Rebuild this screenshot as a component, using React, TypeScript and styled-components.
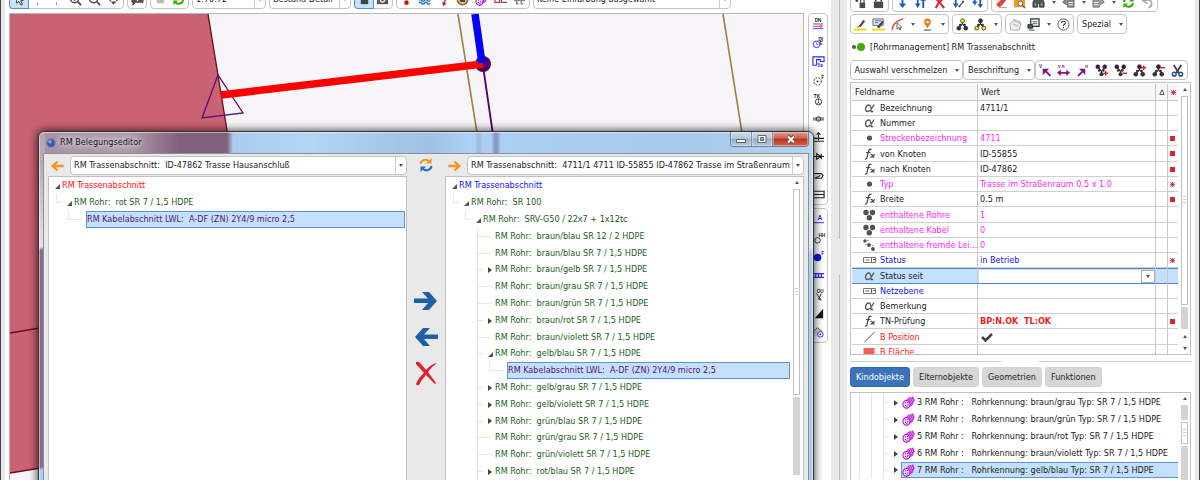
import React from "react";
import styled, { createGlobalStyle, css } from "styled-components";

const Global = createGlobalStyle`
  *, *::before, *::after { box-sizing: border-box; }
  html, body, #root { height: 100%; }
  body {
    margin: 0;
    overflow: hidden;
    background: #fff;
    color: #222;
    font: 9px/15px "DejaVu Sans Condensed", "Open Sans", sans-serif;
  }
  button, select, input { font: inherit; color: inherit; margin: 0; padding: 0; border-radius: 0; }
  ul { list-style: none; margin: 0; padding: 0; }
`;

/* ---------- icons ---------- */

const Purple = "#8a0f8a";
const Dark = "#4a4a4a";

const treeNodes = (top: string, bottom: string, mark?: string) => (
  <>
    <path d="M7 4v3M7 6L3 11M7 6l4 5" stroke="#333" strokeWidth="1.3" fill="none" />
    <circle cx="7" cy="3" r="2.2" fill={top} stroke="#333" strokeWidth=".8" />
    <circle cx="3" cy="11" r="2.1" fill={bottom} stroke="#333" strokeWidth=".8" />
    <circle cx="10.500" cy="11" r="2.1" fill={bottom} stroke="#333" strokeWidth=".8" />
    <circle cx="4.500" cy="7.500" r="1.300" fill="#333" />
    <circle cx="9.300" cy="7.500" r="1.300" fill="#333" />
    {mark && <path d={mark} stroke="#e02020" strokeWidth="1.6" />}
  </>
);

const mergeNodes = (mark: string) => (
  <>
    <path d="M7 11V7M7 8L3 3M7 8l4-5" stroke="#333" strokeWidth="1.3" fill="none" />
    <circle cx="7" cy="11" r="2.2" fill="#333" />
    <circle cx="3" cy="3" r="2.1" fill="#4b0a5e" stroke="#333" strokeWidth=".8" />
    <circle cx="10.500" cy="3" r="2.1" fill="#4b0a5e" stroke="#333" strokeWidth=".8" />
    <circle cx="4.500" cy="7" r="1.4" fill="#333" />
    <circle cx="9" cy="7" r="1.4" fill="#333" />
    <path d={mark} stroke="#e02020" strokeWidth="1.6" />
  </>
);

const tiny = (x: number, y: number, t: string, fill = "#222", size = 5) => (
  <text x={x} y={y} fontSize={size} fontWeight="700" fill={fill} fontFamily="Liberation Sans, sans-serif">{t}</text>
);

const drawings: Record<string, React.ReactNode> = {
  cursor: <path d="M4 1v10l2.500-2 2 4 1.700-.8-2-4H11z" fill="#fff" stroke="#333" strokeWidth="1" />,
  tick: <path d="M7 2v2M7 10v3" stroke="#888" />,
  zoomIn: <><circle cx="6" cy="6" r="4.500" fill="#fff" stroke={Dark} strokeWidth="1.500" /><path d="M9.500 9.500L13 13" stroke={Dark} strokeWidth="2" /><path d="M4 6.500h4M6 4.500v4" stroke="#1769c5" strokeWidth="1.500" /></>,
  zoomOut: <><circle cx="6" cy="6" r="4.500" fill="#fff" stroke={Dark} strokeWidth="1.500" /><path d="M9.500 9.500L13 13" stroke={Dark} strokeWidth="2" /></>,
  move: <path d="M7 12.500L4.500 9.500h5zM7 1.500L5 4h4zM1.500 7L4 5v4zM12.500 7L10 5v4z" fill={Dark} stroke={Dark} strokeWidth=".5" />,
  comment: <><path d="M1 2h12v8H5l-3 3v-3H1z" fill="#555" stroke="#333" strokeWidth=".8" /><path d="M7 3.500v3M7 7.500V9" stroke="#fff" strokeWidth="1.200" /></>,
  stop: <path d="M3 3h8v8H3z" fill="#bdbdbd" />,
  refresh: <><path d="M2 6.500A5 5 0 0 1 10.500 4M12 7.500A5 5 0 0 1 3.500 10" fill="none" stroke="#39a800" strokeWidth="2" /><path d="M12.500 1v5h-5zM1.500 13V8h5z" fill="#39a800" /></>,
  blueSquare: <path d="M3 2h8v10H3z" fill="#444" />,
  camera: <><path d="M1 3h12v9H1z" fill="#555" /><circle cx="7" cy="7.500" r="3" fill="#eee" /><circle cx="7" cy="7.500" r="1.500" fill="#555" /></>,
  thermo: <><path d="M7 1v8" stroke="#b01818" strokeWidth="2" /><circle cx="7" cy="10.500" r="2.500" fill="#b01818" stroke="#e0a060" strokeWidth=".8" /></>,
  waves: <path d="M1 5q1.500-2 3 0t3 0 3 0 3 0M1 8q1.500-2 3 0t3 0 3 0 3 0M1 11q1.500-2 3 0t3 0 3 0 3 0" stroke="#2a75b8" strokeWidth="1.500" fill="none" />,
  bolt: <path d="M11 1L8 6h1.500L7 13M6.500 9.500L7 13l2.500-2" fill="none" stroke="#c03040" strokeWidth="1.500" />,
  ring: <><circle cx="7" cy="7" r="5.500" fill="#fff4d8" stroke="#8a6420" strokeWidth="1.800" /><path d="M4 6h6v4H4z" fill="#5a4a30" /></>,
  tube: <><path d="M1 7l6-5 5-1.500 1.500 4-2 5-5 3.500z" fill="#c61ae8" /><path d="M6 3l4 6M8 2l3 6M10 1l2 5M9 11L4 3M3 4l3 3" stroke="#f3c6fb" strokeWidth=".7" /><ellipse cx="4.800" cy="9" rx="3.800" ry="4.200" fill="#fff" stroke="#b010d8" strokeWidth="1.200" /><path d="M3 7.500h1.500M5.500 7h1.500M3 10h1.500M5.500 9.500H7M4.500 11.800H6" stroke="#a010c8" strokeWidth="1.400" /></>,
  link: <path d="M1 4v6h5V7H2M8 4v6h6M8 7h3" fill="none" stroke="#a33a5a" strokeWidth="1.300" />,
  plug: <path d="M1 8h12M4 8v4M9 8v4M3 11.500h3M8 11.500h3" fill="none" stroke="#888" strokeWidth="1.500" />,
  lockDot: <><circle cx="3" cy="5" r="1.500" fill={Dark} /><path d="M6 7h6v6H6z" fill={Dark} /><path d="M7.200 7V5a1.800 2 0 0 1 3.600 0v2" fill="none" stroke={Dark} strokeWidth="1.300" /></>,
  lock: <><path d="M2 6h10v7H2z" fill={Dark} /><path d="M4 6V4a3 3 0 0 1 6 0v2" fill="none" stroke={Dark} strokeWidth="1.800" /></>,
  downHead: <path d="M6 1h2v7h3l-4 5-4-5h3z" fill="#1a5fb8" />,
  downUp: <path d="M3 1h2v7h2l-3 5-3-5h2zM9 13V5H7l3-4 3 4h-2v8z" fill="#1a5fb8" />,
  cross: <path d="M2 2q5 4 10 11M12 2Q6 6 3 13" fill="none" stroke="#dd2233" strokeWidth="2.200" />,
  downSlash: <><path d="M3 1h2v7h2l-3 5-3-5h2z" fill="#1a5fb8" /><path d="M8 11l4-5" stroke={Dark} strokeWidth="1.200" /><path d="M7 10h2v2H7zM11 5h2v2h-2z" fill={Dark} /></>,
  downTwo: <><path d="M3 1h2v5h2l-3 4-3-4h2zM9 3h2v6h2l-3 4-3-4h2z" fill="#1a5fb8" /><path d="M10 5l3-3" stroke={Dark} /></>,
  eraser: <><path d="M1.500 9L9 1.500 12.500 4 6 11.500H3z" fill="#ef3c3c" /><path d="M4 12.500h9" stroke="#999" /></>,
  folderSearch: <><path d="M1 2h6l1 1.500h5V12H1z" fill="#f39a1e" /><circle cx="8" cy="8" r="2.600" fill="#fff" stroke="#666" /><path d="M10 10l3 3" stroke="#666" strokeWidth="1.600" /></>,
  binoculars: <><path d="M1 12V7l2-5h3v3h2V2h3l2 5v5H8V8H6v4z" fill="#555" stroke="#222" strokeWidth=".8" /><path d="M3.500 8v2.500M10.500 8v2.500" stroke="#ccc" /></>,
  back: <><path d="M1 6l5-4v2h7v8H6v-2L1 7z" fill="#8b8b8b" stroke="#555" strokeWidth=".8" /><path d="M7 7h5M7 9.500h5" stroke="#eee" /></>,
  fwd: <><path d="M13 6L8 2v2H1v8h7v-2l5-3z" fill="#9a9a9a" stroke="#666" strokeWidth=".8" /><path d="M2 7h5M2 9.500h5" stroke="#eee" /></>,
  undo: <path d="M8 13q5-3 3-7-2-3-8-1M6 1L2 5l5 3" fill="none" stroke="#aaa" strokeWidth="1.800" />,
  marker: <><path d="M5 9l5-7 2 1.500L7 10z" fill={Dark} /><path d="M2 10l3-1 1 1z" fill={Dark} /><path d="M0 12.500h13" stroke="#f3de00" strokeWidth="2.200" /></>,
  markerForm: <><path d="M1 1h11v7H1z" fill="#dce9f8" stroke="#667" /><path d="M3 3h7M3 5h4" stroke="#4a78b0" /><path d="M5 10l6-7 2 1-5 7z" fill={Dark} /><path d="M0 12.500h14" stroke="#f3de00" strokeWidth="2.200" /></>,
  trace: <><path d="M1 13Q2 4 13 1" fill="none" stroke="#ef3c3c" strokeWidth="1.300" /><path d="M6.500 5v7l2-1.500 1 2.500 1-.5-1-2.500h2z" fill="#fff" stroke="#444" strokeWidth=".9" /></>,
  pin: <><path d="M7 11Q3 6 3.500 4a3.500 3.500 0 0 1 7 0Q11 6 7 11z" fill="#f07e14" /><circle cx="7" cy="4.200" r="1.300" fill="#fff" /><path d="M3 13h8" stroke="#666" strokeWidth="1.300" /></>,
  nodesTop: treeNodes("#f7e400", "#333"),
  nodesBottom: treeNodes("#333", "#f7e400"),
  box: <path d="M1 6l4-3 8 3-2 7H2zM5 3V1.500L12 4v2M4 6.500l6 2" fill="#eee" stroke="#aaa" />,
  forms: <><path d="M4 1h9v8H4z" fill="#e9f2e9" stroke="#333" strokeWidth="1.300" /><path d="M6 4h5M6 6h5" stroke="#3c8a3c" /><path d="M1 7h5v4H1zM2 13h6" fill="#555" stroke="#333" /></>,
  help: <><circle cx="7" cy="7" r="6" fill="#fff" stroke="#555" /><path d="M5 5.500q0-2 2-2t2 1.800q0 1-1.200 1.700T7 8.500M7 9.800v1.200" fill="none" stroke="#444" strokeWidth="1.200" /></>,
  arrowNW: <>{tiny(0, 4, "V", Purple, 5)}<path d="M4 5h7L8.500 7.500l4.500 4.500-1.500 1.500L7 9l-3 3z" fill={Purple} /></>,
  arrowLR: <>{tiny(1, 4, "v n", Purple, 5)}<path d="M0 9.500L4 6v2.500h6V6l4 3.500L10 13v-2.500H4V13z" fill={Purple} /></>,
  arrowNE: <>{tiny(10, 4, "n", Purple, 5)}<path d="M3 5h7v7L7.500 9.200 3 13.500 1.500 12 6 7.700z" fill={Purple} /></>,
  mergePlus: mergeNodes("M9 10h5M11.500 7.500v5"),
  mergeMinus: mergeNodes("M9 10h5"),
  splitPlus: treeNodes("#4b0a5e", "#333", "M9 4h5M11.500 1.500v5"),
  splitMinus: treeNodes("#4b0a5e", "#333", "M9 4h5"),
  scissors: <><path d="M3 1l5.500 9M11 1L5.500 10" stroke="#444" strokeWidth="2" /><circle cx="3.500" cy="11" r="2" fill="none" stroke="#24508f" strokeWidth="1.600" /><circle cx="10.500" cy="11" r="2" fill="none" stroke="#24508f" strokeWidth="1.600" /></>,
  sDN: <>{tiny(3, 5, "DN")}<path d="M1 7.500h11M1 12.500h11" stroke="#3b3bff" /><path d="M1 10h10M9 8.500l2 1.500-2 1.500" stroke="#f22" fill="none" /></>,
  sDial: <>{tiny(7, 5, "DI")}{tiny(8, 10, "E")}<circle cx="5" cy="9" r="3.500" fill="none" stroke="#5a5aff" strokeWidth="1.200" /><path d="M5 7v2h2" stroke="#5a5aff" fill="none" /></>,
  sBox: <><path d="M5 11H1V2h12v5H9V5H5v6" fill="none" stroke="#2a2af5" strokeWidth="1.200" />{tiny(6, 13, "5a", "#1515e0")}</>,
  sGear: <><circle cx="6" cy="8" r="4" fill="none" stroke="#333" strokeDasharray="2 1.200" /><circle cx="6" cy="8" r="1" fill="#222" />{tiny(10, 5, "F")}</>,
  sTK: <>{tiny(2, 5, "TK")}<circle cx="7" cy="9.500" r="3.300" fill="none" stroke="#333" /><path d="M7 6v4l-2 2M7 10l2 2" stroke="#333" fill="none" strokeWidth=".8" /></>,
  sValve: <><path d="M1 6.500h12M1 8.500h12" stroke="#333" /><circle cx="7" cy="7.500" r="2.400" fill="#aaa" stroke="#333" /></>,
  sLift: <path d="M7 10V2M5 4l2-2 2 2M1 8h12M1 11h12" fill="none" stroke="#222" strokeWidth="1.200" />,
  sDiode: <path d="M1 7h12M5 4l5 3-5 3zM10 4v6" fill="none" stroke="#222" strokeWidth="1.100" />,
  sFuse: <path d="M1 5h9l2 2-2 3H3l6-3" fill="none" stroke="#222" strokeWidth="1.200" />,
  sRect: <path d="M1 3.500h12v7H1zM1 7h12" fill="none" stroke="#222" strokeWidth="1.200" />,
  sA: <>{tiny(6, 9, "A", "#2a2af5", 7)}<path d="M2 11.500h11" stroke="#2a2af5" /></>,
  sHH: <>{tiny(7, 6, "HH", "#222", 5)}<circle cx="6" cy="10" r="3" fill="none" stroke="#333" /></>,
  sBlob: <><circle cx="6" cy="8" r="4" fill="#1111f0" />{tiny(10, 5, "F", "#1111f0")}</>,
  sBars: <path d="M1 5h12M1 9h12M4 5v4M7 5v4M10 5v4" stroke="#2a2af5" strokeWidth="1.300" />,
  sOU: <>{tiny(5, 5, "OU")}<path d="M5 6l4 6M10 6l-3 6 3 1" stroke="#222" fill="none" /></>,
  sCorner: <path d="M12 2v10H3z" fill="#111" />,
  sHouse: <><path d="M1 12V6l5-4 5 4" fill="#ddd" stroke="#555" /><circle cx="9" cy="9" r="3" fill="#fff" stroke="#2a2af5" /><circle cx="9" cy="9" r="1" fill="#2a2af5" /></>,
};

const Svg = styled.svg`
  display: block;
  flex: none;
  overflow: visible;
`;

const Icon = ({ name, size = 13 }: { name: string; size?: number }) => (
  <Svg width={size} height={size} viewBox="0 0 14 14" aria-hidden="true">{drawings[name]}</Svg>
);

/* ---------- toolbars ---------- */

const ToolGroup = styled.div<{ $column?: boolean }>`
  display: flex;
  flex: none;
  flex-direction: ${(p) => (p.$column ? "column" : "row")};
  border: 1px solid #c4c4c4;
  border-radius: 4px;
  background: #fff;
  & > * + * { ${(p) => (p.$column ? "border-top" : "border-left")}: 1px solid #cdcdcd; }
`;

const ToolButton = styled.button<{ $on?: boolean; $wide?: number }>`
  display: flex;
  align-items: center;
  justify-content: center;
  flex: none;
  height: 18px;
  width: ${(p) => (p.$wide ? `${p.$wide}px` : "19px")};
  border: 0;
  background: ${(p) => (p.$on ? "#c5e1fb" : "transparent")};
  ${(p) => p.$on && css`box-shadow: 0 0 0 1px #5b90d0;`}
  white-space: nowrap;
  &:first-child {
    border-radius: 3px 0 0 3px;
    width: ${(p) => (p.$wide ? `${p.$wide}px` : "18px")};
  }
`;

const Caret = styled.span`
  border: 2px solid transparent;
  border-top: 3px solid #555;
  border-bottom: 0;
`;

const DropButton = styled(ToolButton)`
  width: 11px;
`;

const Drop = ({ label }: { label: string }) => (
  <DropButton type="button" aria-label={label}><Caret /></DropButton>
);

const Combo = styled.div<{ $width?: number }>`
  display: flex;
  align-items: center;
  position: relative;
  ${(p) => (p.$width ? css`flex: none; width: ${p.$width}px;` : css`flex: 1; min-width: 0;`)}
  height: 19px;
  border: 1px solid #c4c4c4;
  border-radius: 4px;
  background: #fff;
  &::after {
    content: "";
    position: absolute;
    right: 3px;
    top: 7px;
    border: 2px solid transparent;
    border-top: 3px solid #555;
    border-bottom: 0;
    pointer-events: none;
  }
  select {
    appearance: none;
    width: 100%;
    height: 17px;
    border: 0;
    padding: 0 11px 0 3px;
    background: linear-gradient(#cdcdcd, #cdcdcd) right 10px top 0 / 1px 100% no-repeat transparent;
    white-space: pre;
    outline: 0;
  }
`;

const ComboBox = ({ label, value, width }: { label: string; value: string; width?: number }) => (
  <Combo $width={width}>
    <select aria-label={label}><option>{value}</option></select>
  </Combo>
);

const Tools = ({ names, on }: { names: string[]; on?: string }) => (
  <>
    {names.map((n, i) =>
      n === "v" ? <Drop key={i} label="Mehr" /> : (
        <ToolButton key={i} type="button" aria-label={n} $on={n === on}><Icon name={n} /></ToolButton>
      )
    )}
  </>
);

/* ---------- frame ---------- */

const Shell = styled.div`
  display: flex;
  height: 100vh;
  overflow: hidden;
  border-left: 1px solid #444;
  border-right: 1px solid #444;
  background: #e8e8e8;
`;

const MapPane = styled.main`
  position: relative;
  flex: 1;
  min-width: 0;
  display: flex;
  flex-direction: column;
  margin-left: 4px;
  padding: 0 3px 0 4px;
  background: #fff;
`;

const MapToolbar = styled.div`
  display: flex;
  align-items: flex-end;
  gap: 3px;
  flex: none;
  height: 13px;
  padding-bottom: 4px;
  overflow: hidden;
`;

const MapRow = styled.div`
  display: flex;
  gap: 4px;
  flex: 1;
  min-height: 0;
`;

const MapCanvas = styled.svg`
  flex: 1;
  min-width: 0;
  height: 100%;
  border: 1px solid #b8b8b8;
  border-bottom: 0;
  background: #f7f5f9;
`;

const SideStrip = styled.div`
  display: flex;
  flex-direction: column;
  flex: none;
  width: 20px;
  gap: 3px;
`;

const StripButton = styled(ToolButton)`
  width: 18px;
  height: 19px;
`;

const Splitter = styled.div`
  flex: none;
  width: 16px;
  display: flex;
  flex-direction: column;
  gap: 36px;
  padding-left: 8px;
`;

const SplitLine = styled.span<{ $fixed?: boolean }>`
  ${(p) => (p.$fixed ? "height: 239px;" : "flex: 1;")}
  width: 1px;
  background: #bcbcbc;
`;

/* ---------- trees ---------- */

const TreeList = styled.ul`
  flex: 1;
  min-width: 0;
`;

const TreeRow = styled.li`
  display: flex;
  height: 17px;
  line-height: 17px;
  white-space: pre;
  &:nth-child(5n) { height: 16px; }
`;

const Guide = styled.span<{ $kind: "tee" | "elbow" | "none" | "line" }>`
  position: relative;
  flex: none;
  width: 12px;
  &::before {
    content: "";
    position: absolute;
    left: 6px;
    top: 0;
    width: 6px;
    height: ${(p) => (p.$kind === "elbow" ? "50%" : "100%")};
    border-left: 1px solid #e6e6e6;
    ${(p) => p.$kind === "elbow" && "border-bottom: 1px solid #e6e6e6;"}
    ${(p) => p.$kind === "tee" && "background: linear-gradient(#e6e6e6, #e6e6e6) 0 8px / 100% 1px no-repeat;"}
    ${(p) => p.$kind === "none" && "display: none;"}
  }
`;

const Toggle = styled.span<{ $state?: "open" | "closed" | "leaf" }>`
  flex: none;
  width: 12px;
  display: flex;
  align-items: center;
  padding-left: 5px;
  &::before {
    content: "";
    ${(p) => p.$state === "open" && "border: solid transparent; border-width: 0 0 5px 5px; border-bottom-color: #555; margin-top: 2px;"}
    ${(p) => p.$state === "closed" && "border: 3px solid transparent; border-left: 4px solid #444; border-right: 0;"}
    ${(p) => p.$state === "leaf" && "width: 9px; height: 1px; background: #e6e6e6; margin: 0 0 0 -5px;"}
  }
`;

const Label = styled.span<{ $tone: string; $selected?: boolean }>`
  color: ${(p) => p.$tone};
  ${(p) => p.$selected && css`
    flex: 1;
    line-height: 15px;
    border: 1px solid #5d93cf;
    background: #c3e1fe;
  `}
`;

type Node = { level: number; text: string; state?: "open" | "closed"; tone?: string; selected?: boolean; tee?: boolean };

const Green = "#1b5e20";
const Cable = "#5a1173";

const leftTree: Node[] = [
  { level: 0, text: "RM Trassenabschnitt", state: "open", tone: "#ff1010" },
  { level: 1, text: "RM Rohr:  rot SR 7 / 1,5 HDPE", state: "open" },
  { level: 2, text: "RM Kabelabschnitt LWL:  A-DF (ZN) 2Y4/9 micro 2,5", tone: Cable, selected: true },
];

const pipe = (name: string, state?: "open" | "closed"): Node => ({ level: 3, text: `RM Rohr:  ${name} HDPE`, state, tee: true });

const rightTree: Node[] = [
  { level: 0, text: "RM Trassenabschnitt", state: "open", tone: "#1010ff" },
  { level: 1, text: "RM Rohr:  SR 100", state: "open" },
  { level: 2, text: "RM Rohr:  SRV-G50 / 22x7 + 1x12tc", state: "open" },
  pipe("braun/blau SR 12 / 2"),
  pipe("braun/blau SR 7 / 1,5"),
  pipe("braun/gelb SR 7 / 1,5", "closed"),
  pipe("braun/grau SR 7 / 1,5"),
  pipe("braun/grün SR 7 / 1,5"),
  pipe("braun/rot SR 7 / 1,5", "closed"),
  pipe("braun/violett SR 7 / 1,5"),
  pipe("gelb/blau SR 7 / 1,5", "open"),
  { level: 4, text: "RM Kabelabschnitt LWL:  A-DF (ZN) 2Y4/9 micro 2,5", tone: Cable, selected: true },
  pipe("gelb/grau SR 7 / 1,5", "closed"),
  pipe("gelb/violett SR 7 / 1,5", "closed"),
  pipe("grün/blau SR 7 / 1,5", "closed"),
  pipe("grün/grau SR 7 / 1,5"),
  pipe("grün/violett SR 7 / 1,5"),
  pipe("rot/blau SR 7 / 1,5", "closed"),
];

const guideKind = (n: Node, i: number) => {
  if (i === n.level - 1) return n.tee ? "tee" : "elbow";
  return n.level === 4 && i === 2 ? "line" : "none";
};

const Tree = ({ nodes, label }: { nodes: Node[]; label: string }) => (
  <TreeList role="tree" aria-label={label}>
    {nodes.map((n, r) => (
      <TreeRow key={r} role="treeitem" aria-selected={!!n.selected}>
        {Array.from({ length: n.level }, (_, i) => <Guide key={i} $kind={guideKind(n, i)} />)}
        <Toggle $state={n.state ?? "leaf"} />
        <Label $tone={n.tone ?? Green} $selected={n.selected}>{n.text}</Label>
      </TreeRow>
    ))}
  </TreeList>
);

/* ---------- scroll bars ---------- */

const Scroll = styled.div`
  flex: none;
  width: 7px;
  display: flex;
  flex-direction: column;
  align-items: stretch;
  gap: 2px;
`;

const ScrollArrow = styled.span<{ $down?: boolean }>`
  flex: none;
  align-self: center;
  margin: 4px 0 3px;
  border: 2px solid transparent;
  ${(p) => (p.$down
    ? "border-top: 3px solid #555; border-bottom: 0;"
    : "border-bottom: 3px solid #555; border-top: 0;")}
`;

const Thumb = styled.span<{ $size: number }>`
  flex: none;
  height: ${(p) => p.$size}px;
  border: 1px solid #c2c2c2;
  background: repeating-linear-gradient(#ccc 0 1px, #fff 1px 3px) center / 3px 9px no-repeat #fff;
`;

const Trough = styled.span<{ $size?: number }>`
  ${(p) => (p.$size ? css`flex: none; height: ${p.$size}px;` : "flex: 1;")}
  background: #d4d4d4;
`;

/* ---------- dialog ---------- */

const Dialog = styled.section`
  position: absolute;
  left: 33px;
  right: 17px;
  top: 131px;
  bottom: -12px;
  display: flex;
  flex-direction: column;
  padding: 0 4px;
  border: 1px solid #333;
  border-radius: 6px 6px 0 0;
  box-shadow: inset 0 0 0 1px rgba(255, 255, 255, 0.5), 0 0 9px 1px rgba(0, 0, 0, 0.7);
  background:
    linear-gradient(#b9a3b5 22px, #eadfe6 115px, #8b6788 118px, #8b6788 335px, #a9cff5 338px) left / 6px 100% no-repeat,
    linear-gradient(#bdd4ec 22px, #dde8f3 115px, #a9cbf0 122px) right / 6px 100% no-repeat,
    linear-gradient(90deg, transparent 436px, rgba(130, 130, 130, 0.3) 440px, transparent 444px, transparent 452px, rgba(110, 110, 170, 0.6) 456px 458px, transparent 462px),
    linear-gradient(90deg, #a892a5 0, #b09aac 90px, #82607c 140px, #80607e 188px, #a9cbf0 194px, #b5d5f5 270px, #a0c0e4 390px, #acd0f6 430px, #a8c8ec 650px, #b4d3f2 100%);
`;

const TitleBar = styled.header`
  display: flex;
  flex: none;
  align-items: center;
  height: 21px;
  padding-left: 3px;
`;

const Title = styled.h1`
  flex: 1;
  margin: 0 0 0 4px;
  font-size: 9px;
  font-weight: 400;
  color: #111;
  text-shadow: 0 0 4px #fff, 0 0 8px #fff;
`;

const WindowButtons = styled.div`
  display: flex;
  align-self: flex-start;
  border: 1px solid #6f7f92;
  border-top: 0;
  border-radius: 0 0 4px 4px;
  overflow: hidden;
`;

const WindowButton = styled.button<{ $close?: boolean }>`
  display: flex;
  align-items: center;
  justify-content: center;
  width: ${(p) => (p.$close ? 35 : 21)}px;
  height: 14px;
  border: 0;
  border-right: ${(p) => (p.$close ? 0 : "1px solid #7f8fa2")};
  box-shadow: inset 0 0 0 1px rgba(255, 255, 255, 0.35);
  background: ${(p) =>
    p.$close
      ? "linear-gradient(#e0a093, #cf5c48 45%, #b8321e 50%, #d5654b)"
      : "linear-gradient(#cddcec, #b4c8de 45%, #93aac4 50%, #b3cbe3)"};
`;

const DialogBody = styled.div`
  flex: 1;
  min-height: 0;
  display: grid;
  grid-template-columns: minmax(0, 1fr) 38px minmax(0, 1fr);
  border: 1px solid #8e8e98;
  border-bottom: 0;
  padding: 2px 4px 0;
  background: #e9e9e9;
`;

const Column = styled.div`
  display: flex;
  flex-direction: column;
  min-height: 0;
`;

const PickRow = styled.div`
  display: flex;
  align-items: center;
  gap: 3px;
  flex: none;
  height: 19px;
  margin-bottom: 1px;
`;

const Flat = styled.button`
  display: flex;
  align-items: center;
  justify-content: center;
  flex: none;
  min-width: 19px;
  border: 0;
  background: none;
`;

const TreePanel = styled.div<{ $scrolls?: boolean }>`
  flex: 1;
  min-height: 0;
  display: flex;
  gap: 3px;
  padding: 0 ${(p) => (p.$scrolls ? 3 : 1)}px 15px 1px;
  border: 1px solid #c0c0c0;
  background: #fff;
  overflow: hidden;
`;

const TransferColumn = styled.div`
  display: flex;
  flex-direction: column;
  align-items: center;
  gap: 12px;
  padding-top: 2px;
`;

const TransferButtons = styled.div`
  display: flex;
  flex-direction: column;
  gap: 12px;
  margin-top: 105px;
`;

const BigArrow = ({ flip }: { flip?: boolean }) => (
  <Svg width="24" height="24" viewBox="0 0 24 24" aria-hidden="true">
    <path
      d={flip ? "M24 14H10l6 7h-7L1 12l8-9h7l-6 6.500h14z" : "M0 14h14l-6 7h7l8-9-8-9H8l6 6.500H0z"}
      fill="#1f5fa8"
    />
  </Svg>
);

const OrangeArrow = ({ flip }: { flip?: boolean }) => (
  <Svg width="13" height="12" viewBox="0 0 13 12" aria-hidden="true">
    <path d={flip ? "M12.500 6H2M6.500 1.500L1.700 6l4.800 4.500" : "M.5 6H11M6.500 1.500L11.300 6l-4.800 4.500"} fill="none" stroke="#fb9220" strokeWidth="2.300" />
  </Svg>
);

const BelegungsEditor = () => (
  <Dialog role="dialog" aria-label="RM Belegungseditor">
    <TitleBar>
      <Svg width="10" height="10" viewBox="0 0 10 10" aria-hidden="true">
        <circle cx="5" cy="5" r="4.300" fill="#3558ac" stroke="#6d86c4" strokeWidth="1.400" strokeDasharray="1.500 1" />
        <circle cx="4" cy="3.700" r="1.800" fill="#8fa8de" />
      </Svg>
      <Title>RM Belegungseditor</Title>
      <WindowButtons>
        <WindowButton type="button" aria-label="Minimieren">
          <Svg width="10" height="8"><path d="M.5 4.500h9v3h-9z" fill="#fff" stroke="#666" /></Svg>
        </WindowButton>
        <WindowButton type="button" aria-label="Maximieren">
          <Svg width="10" height="8"><path d="M1 .5h8v7H1z" fill="#fff" stroke="#666" /><path d="M3.500 2.500h3v3h-3z" fill="#9ab" stroke="#666" /></Svg>
        </WindowButton>
        <WindowButton type="button" aria-label="Schließen" $close>
          <Svg width="10" height="9"><path d="M2 1l6 7M8 1L2 8" stroke="#6a4a50" strokeWidth="3.500" /><path d="M2 1.500l6 6M8 1.500l-6 6" stroke="#fff" strokeWidth="2" /></Svg>
        </WindowButton>
      </WindowButtons>
    </TitleBar>
    <DialogBody>
      <Column>
        <PickRow>
          <Flat type="button" aria-label="Zurück"><OrangeArrow flip /></Flat>
          <ComboBox label="Trasse links" value={"RM Trassenabschnitt:\u00a0 ID-47862 Trasse Hausanschluß"} />
        </PickRow>
        <TreePanel><Tree nodes={leftTree} label="Belegung links" /></TreePanel>
      </Column>
      <TransferColumn>
        <Flat type="button" aria-label="Aktualisieren">
          <Svg width="14" height="14" viewBox="0 0 14 14">
            <path d="M1.500 6A5 5 0 0 1 10 3.300" fill="none" stroke="#fb9220" strokeWidth="2" />
            <path d="M12.500 0v5.500H7z" fill="#fb9220" />
            <path d="M12.500 8A5 5 0 0 1 4 10.700" fill="none" stroke="#1f6fb8" strokeWidth="2" />
            <path d="M1.500 14V8.500H7z" fill="#1f6fb8" />
          </Svg>
        </Flat>
        <TransferButtons>
          <Flat type="button" aria-label="Nach rechts"><BigArrow /></Flat>
          <Flat type="button" aria-label="Nach links"><BigArrow flip /></Flat>
          <Flat type="button" aria-label="Entfernen">
            <Svg width="24" height="24" viewBox="0 0 24 24">
              <path d="M2 1q3-1 6 3l4 5q5-6 11-7-6 4-9 9l8 11-1 1-9-9q-5 5-7 10-2 1-3-1 3-7 8-11L2 3z" fill="#e0202f" />
            </Svg>
          </Flat>
        </TransferButtons>
      </TransferColumn>
      <Column>
        <PickRow>
          <Flat type="button" aria-label="Vor"><OrangeArrow /></Flat>
          <ComboBox label="Trasse rechts" value={"RM Trassenabschnitt:\u00a0 4711/1 4711 ID-55855 ID-47862 Trasse im Straßenraum"} />
        </PickRow>
        <TreePanel $scrolls>
          <Tree nodes={rightTree} label="Belegung rechts" />
          <Scroll><ScrollArrow /><Thumb $size={206} /><Trough /></Scroll>
        </TreePanel>
      </Column>
    </DialogBody>
  </Dialog>
);

/* ---------- property panel ---------- */

const SidePanel = styled.aside`
  flex: none;
  width: 348px;
  margin-right: 4px;
  padding: 0 3px;
  display: flex;
  flex-direction: column;
  background: #fff;
`;

const PanelBar = styled.div<{ $clipped?: boolean; $tight?: boolean }>`
  display: flex;
  flex: none;
  align-items: flex-end;
  gap: ${(p) => (p.$tight ? 0 : 3)}px;
  ${(p) => (p.$clipped ? "height: 12px; overflow: hidden;" : "height: 22px;")}
`;

const Heading = styled.h2`
  display: flex;
  align-items: center;
  gap: 1px;
  margin: 0;
  height: 24px;
  padding: 2px 0 0 2px;
  font-size: 9px;
  font-weight: 400;
  span { margin-left: 4px; }
`;

const GridBox = styled.div`
  display: flex;
  flex: none;
  gap: 3px;
  height: 273px;
  margin: 2px 1px 0 0;
  padding: 1px 2px 1px 1px;
  border: 1px solid #c0c0c0;
  overflow: hidden;
`;

const GridArea = styled.div`
  flex: 1;
  min-width: 0;
`;

const Grid = styled.table`
  width: 100%;
  border-collapse: separate;
  border-spacing: 0;
  table-layout: fixed;
  th { height: 17px; padding: 0 3px; text-align: left; font-weight: 400; background: #f6f6f6; border-bottom: 1px solid #c9c9c9; border-right: 1px solid #c9c9c9; overflow: hidden; }
  th:nth-child(n + 3) { padding: 0; text-align: center; }
  th:last-child, td:last-child { border-right: 0; }
`;

const FieldRow = styled.tr<{ $tone?: string; $active?: boolean }>`
  color: ${(p) => p.$tone ?? "#222"};
  td {
    height: 15px;
    padding: 0 0 0 2px;
    line-height: 14px;
    white-space: pre;
    border-bottom: 1px solid #cfcfcf;
    border-right: 1px solid #c9c9c9;
  }
  &:nth-child(4n) td { height: 16px; }
  ${(p) => p.$active && css`
    td { background: #c3e1fe; border-bottom-color: #4f86c6; box-shadow: inset 0 1px 0 #4f86c6; padding-left: 1px; }
    td:first-child { padding-left: 2px; }
  `}
`;

const NameCell = styled.div`
  display: flex;
  align-items: center;
  gap: 3px;
  height: 14px;
  padding-left: 8px;
`;

const Strong = styled.b`
  font-weight: 700;
`;

const Flag = styled.span`
  display: block;
  width: 5px;
  height: 5px;
  background: #dd2233;
`;

const Editor = styled.div`
  display: flex;
  height: 13px;
  margin-top: 1px;
  input { flex: 1; min-width: 0; border: 0; background: #fff; outline: 0; }
  button { display: flex; align-items: center; justify-content: center; width: 14px; border: 1px solid #b0b0b0; background: #fff; }
`;

const fieldIcons: Record<string, React.ReactNode> = {
  alpha: <path d="M11.500 2.500Q8 9.500 5 9.500 3 9.500 3 7 3.500 3 6.500 3 8.500 3 8.700 9.500h2" fill="none" stroke="#555" strokeWidth="1.300" />,
  dot: <circle cx="7" cy="6" r="2.600" fill="#555" />,
  fx: <path d="M9 1.500Q6.800.5 6.200 3L4.500 9.500Q4 11.500 2.500 11M3.500 4.500h4.500M8 6.500q1.500-.5 2 1.300t2 1.200M12.500 6.500L8 9.500" fill="none" stroke="#444" strokeWidth="1.200" />,
  cluster: <g fill="#505050"><circle cx="3.500" cy="3.500" r="2.700" /><circle cx="10" cy="3.500" r="2.700" /><circle cx="6.800" cy="8.800" r="2.700" /></g>,
  chain: <g fill="#505050"><circle cx="2.500" cy="2" r="1.700" /><circle cx="6.500" cy="6" r="1.900" /><circle cx="10.500" cy="10" r="1.900" /><path d="M5 1l1 1M3 5l1 1M10 6l1 1" stroke="#505050" /></g>,
  list: <><path d="M1 3.500h12v5H1z" fill="#fff" stroke="#777" /><path d="M3 6h4M9 4v4M10.500 5.500h2" stroke="#666" /></>,
  slash: <path d="M2 11L12 1" stroke="#555" />,
  fill: <path d="M1 2h11v9H1z" fill="#ff5a5a" />,
};

type Field = { icon: string; name: string; value?: string; tone?: string; flag?: "square" | "star"; kind?: "edit" | "check" | "bold" };

const M = "#fb1ffb";
const fields: Field[] = [
  { icon: "alpha", name: "Bezeichnung", value: "4711/1" },
  { icon: "alpha", name: "Nummer" },
  { icon: "dot", name: "Streckenbezeichnung", value: "4711", tone: M, flag: "square" },
  { icon: "fx", name: "von Knoten", value: "ID-55855", flag: "square" },
  { icon: "fx", name: "nach Knoten", value: "ID-47862", flag: "square" },
  { icon: "dot", name: "Typ", value: "Trasse im Straßenraum 0.5 x 1.0", tone: M, flag: "star" },
  { icon: "fx", name: "Breite", value: "0.5 m", flag: "square" },
  { icon: "cluster", name: "enthaltene Rohre", value: "1", tone: M },
  { icon: "cluster", name: "enthaltene Kabel", value: "0", tone: M },
  { icon: "chain", name: "enthaltene fremde Lei...", value: "0", tone: M },
  { icon: "list", name: "Status", value: "in Betrieb", tone: "#1515ff", flag: "star" },
  { icon: "alpha", name: "Status seit", kind: "edit" },
  { icon: "list", name: "Netzebene", tone: "#1515ff" },
  { icon: "alpha", name: "Bemerkung" },
  { icon: "fx", name: "TN-Prüfung", value: "BP:N.OK  TL:OK", flag: "square", kind: "bold" },
  { icon: "slash", name: "B Position", tone: "#ff1515", kind: "check" },
  { icon: "fill", name: "B Fläche", tone: "#ff1515" },
];

const Star = () => (
  <Svg width="5" height="5" viewBox="0 0 5 5" aria-label="Pflichtfeld">
    <path d="M2.500 0v5M0 2.500h5M.3.3l4.400 4.400M4.700.3L.3 4.700" stroke="#e02838" strokeWidth=".9" />
  </Svg>
);

const StarHead = styled.span`
  display: flex;
  justify-content: center;
`;

const FieldValue = ({ field }: { field: Field }) => {
  if (field.kind === "edit")
    return (
      <Editor>
        <input type="text" aria-label={field.name} />
        <button type="button" aria-label="Auswahl öffnen"><Caret /></button>
      </Editor>
    );
  if (field.kind === "check")
    return <Svg width="14" height="12" viewBox="0 0 14 12" aria-label="ja"><path d="M2 6l3.500 3.500L12 3" fill="none" stroke="#444" strokeWidth="2.600" /></Svg>;
  if (field.kind === "bold") return <Label as={Strong} $tone="#f01c1c">{field.value}</Label>;
  return <>{field.value}</>;
};

const FieldGrid = () => (
  <GridBox>
    <GridArea>
      <Grid>
        <colgroup><col width="126" /><col /><col width="12" /><col width="10" /></colgroup>
        <thead>
          <tr>
            <th>Feldname</th>
            <th>Wert</th>
            <th><StarHead><Svg width="6" height="6"><path d="M3 .8L.8 5.500h4.400z" fill="none" stroke="#555" /></Svg></StarHead></th>
            <th><StarHead><Star /></StarHead></th>
          </tr>
        </thead>
        <tbody>
          {fields.map((f) => (
            <FieldRow key={f.name} $tone={f.tone} $active={f.kind === "edit"}>
              <td>
                <NameCell>
                  <Svg width="15" height="12" viewBox="0 0 14 12" aria-hidden="true">{fieldIcons[f.icon]}</Svg>
                  <span>{f.name}</span>
                </NameCell>
              </td>
              <td><FieldValue field={f} /></td>
              <td />
              <td>{f.flag === "square" ? <Flag /> : f.flag === "star" ? <Star /> : null}</td>
            </FieldRow>
          ))}
        </tbody>
      </Grid>
    </GridArea>
    <Scroll>
      <ScrollArrow /><Thumb $size={209} /><Trough /><ScrollArrow /><ScrollArrow $down />
    </Scroll>
  </GridBox>
);

const Divider = styled.div`
  display: flex;
  flex: none;
  gap: 36px;
  margin: 6px 0 5px;
  &::before { content: ""; flex: none; width: 152px; height: 1px; background: #cfcfcf; }
  &::after { content: ""; flex: 1; height: 1px; background: #cfcfcf; }
`;

const Tabs = styled.div`
  display: flex;
  flex: none;
  gap: 3px;
`;

const Tab = styled.button<{ $active?: boolean }>`
  height: 20px;
  padding: 0 5px;
  border: 1px solid ${(p) => (p.$active ? "#2f68b0" : "#d3d3d3")};
  border-radius: 3px;
  background: ${(p) => (p.$active ? "#3a73ba" : "#d6d6d6")};
  color: ${(p) => (p.$active ? "#fff" : "#222")};
`;

const ChildBox = styled.div`
  flex: 1;
  min-height: 0;
  display: flex;
  margin: 5px 1px 0 0;
  padding: 0 2px 0 2px;
  border: 1px solid #c0c0c0;
  border-bottom: 0;
  overflow: hidden;
`;

const ChildList = styled(TreeList)`
  padding-top: 1px;
`;

const ChildLabel = styled.span<{ $selected?: boolean }>`
  display: flex;
  align-items: center;
  flex: 1;
  gap: 2px;
  border: 1px solid ${(p) => (p.$selected ? "#5d93cf" : "transparent")};
  border-right: 0;
  background: ${(p) => (p.$selected ? "#c3e1fe" : "none")};
`;

const ChildScroll = styled(Scroll)`
  margin-left: 3px;
`;

const children = ["3|braun/grau", "4|braun/grün", "5|braun/rot", "6|braun/violett", "7|gelb/blau"];

const ChildObjects = () => (
  <ChildBox>
    <ChildList role="tree" aria-label="Kindobjekte">
      {children.map((c) => {
        const [n, name] = c.split("|");
        return (
          <TreeRow key={n} role="treeitem">
            <Guide $kind="line" /><Guide $kind="line" /><Guide $kind="tee" /><Toggle $state="closed" />
            <ChildLabel $selected={n === "7"}>
              <Icon name="tube" />
              <span>{`${n} RM Rohr :   Rohrkennung: ${name} Typ: SR 7 / 1,5 HDPE`}</span>
            </ChildLabel>
          </TreeRow>
        );
      })}
    </ChildList>
    <ChildScroll>
      <ScrollArrow /><Trough $size={15} /><Thumb $size={22} /><Trough />
    </ChildScroll>
  </ChildBox>
);

const Map = () => (
  <MapCanvas role="img" aria-label="Lageplan">
    <path d="M0 0H198L260 380 0 459z" fill="#cb6273" />
    <path d="M0 459l40-6V380H0z" fill="#cb6273" />
    <path d="M198 0L260 380M0 319l30-5M0 459l80-13" stroke="#6d0b1c" strokeWidth="1.300" fill="none" />
    <path d="M448 0l32 200M713 0l32 200" stroke="#a17e3c" strokeWidth="1.600" />
    <path d="M473 52l16 110" stroke="#520066" strokeWidth="1.800" />
    <path d="M208 61l-16 43 41-5z" fill="none" stroke="#5a0f78" strokeWidth="1.300" />
    <circle cx="473" cy="50" r="8" fill="#520066" />
    <path d="M211 81L473 50" stroke="#f00" strokeWidth="7.500" />
    <path d="M465 0l7 49" stroke="#00f" strokeWidth="7.500" />
  </MapCanvas>
);

const Dot = styled.i<{ $color: string; $size: number }>`
  width: ${(p) => p.$size}px;
  height: ${(p) => p.$size}px;
  border-radius: 50%;
  background: ${(p) => p.$color};
`;

const stripOne = ["sDN", "sDial", "sBox", "sGear", "sTK", "sValve", "sLift", "sDiode", "sFuse", "sRect"];
const stripTwo = ["sA", "sHH", "sBlob", "sBars", "sOU", "sCorner", "sHouse"];

export default function App() {
  return (
    <>
      <Global />
      <Shell>
        <MapPane>
          <MapToolbar>
            <ToolGroup><Tools names={["cursor", "tick", "tick", "zoomIn", "zoomOut", "move"]} on="cursor" /></ToolGroup>
            <ToolGroup><Tools names={["comment"]} /></ToolGroup>
            <ToolGroup><Tools names={["stop", "refresh"]} /></ToolGroup>
            <ComboBox label="Maßstab" value="1:70.72" width={74} />
            <ComboBox label="Darstellung" value="Bestand Detail" width={82} />
            <ToolGroup><Tools names={["blueSquare", "camera"]} on="blueSquare" /></ToolGroup>
            <ToolGroup><Tools names={["thermo", "waves", "bolt", "ring", "tube", "link", "plug"]} /></ToolGroup>
            <ComboBox label="Einfärbung" value="Keine Einfärbung ausgewählt" width={198} />
          </MapToolbar>
          <MapRow>
            <Map />
            <SideStrip>
              {[stripOne, stripTwo].map((strip, i) => (
                <ToolGroup key={i} $column>
                  {strip.map((n) => (
                    <StripButton key={n} type="button" aria-label={n}><Icon name={n} /></StripButton>
                  ))}
                </ToolGroup>
              ))}
            </SideStrip>
          </MapRow>
          <BelegungsEditor />
        </MapPane>
        <Splitter><SplitLine $fixed /><SplitLine /></Splitter>
        <SidePanel>
          <PanelBar $clipped>
            <ToolGroup><Tools names={["lockDot", "lock"]} /></ToolGroup>
            <ToolGroup><Tools names={["downHead", "downUp", "cross", "downSlash", "downTwo"]} /></ToolGroup>
            <ToolGroup><Tools names={["eraser", "folderSearch", "binoculars", "v", "back", "v", "fwd", "v", "refresh", "undo"]} /></ToolGroup>
          </PanelBar>
          <PanelBar>
            <ToolGroup><Tools names={["marker", "markerForm", "trace", "v", "pin", "v"]} /></ToolGroup>
            <ToolGroup><Tools names={["nodesTop", "nodesBottom", "v"]} /></ToolGroup>
            <ToolGroup><Tools names={["box", "forms", "v", "help"]} /></ToolGroup>
            <ToolGroup><ToolButton type="button" $wide={37}>Spezial</ToolButton><Drop label="Spezial Menü" /></ToolGroup>
          </PanelBar>
          <Heading><Dot $color="#555" $size={4} /><Dot $color="#3fae0a" $size={8} /><span>[Rohrmanagement] RM Trassenabschnitt</span></Heading>
          <PanelBar $tight>
            <ToolGroup><ToolButton type="button" $wide={100}>Auswahl verschmelzen</ToolButton><Drop label="Verschmelzen Menü" /></ToolGroup>
            <ToolGroup><ToolButton type="button" $wide={59}>Beschriftung</ToolButton><Drop label="Beschriftung Menü" /></ToolGroup>
            <ToolGroup><Tools names={["arrowNW", "arrowLR", "arrowNE", "mergePlus", "mergeMinus", "splitPlus", "splitMinus", "scissors"]} /></ToolGroup>
          </PanelBar>
          <FieldGrid />
          <Divider />
          <Tabs role="tablist">
            {["Kindobjekte", "Elternobjekte", "Geometrien", "Funktionen"].map((t, i) => (
              <Tab key={t} type="button" role="tab" aria-selected={i === 0} $active={i === 0}>{t}</Tab>
            ))}
          </Tabs>
          <ChildObjects />
        </SidePanel>
      </Shell>
    </>
  );
}
